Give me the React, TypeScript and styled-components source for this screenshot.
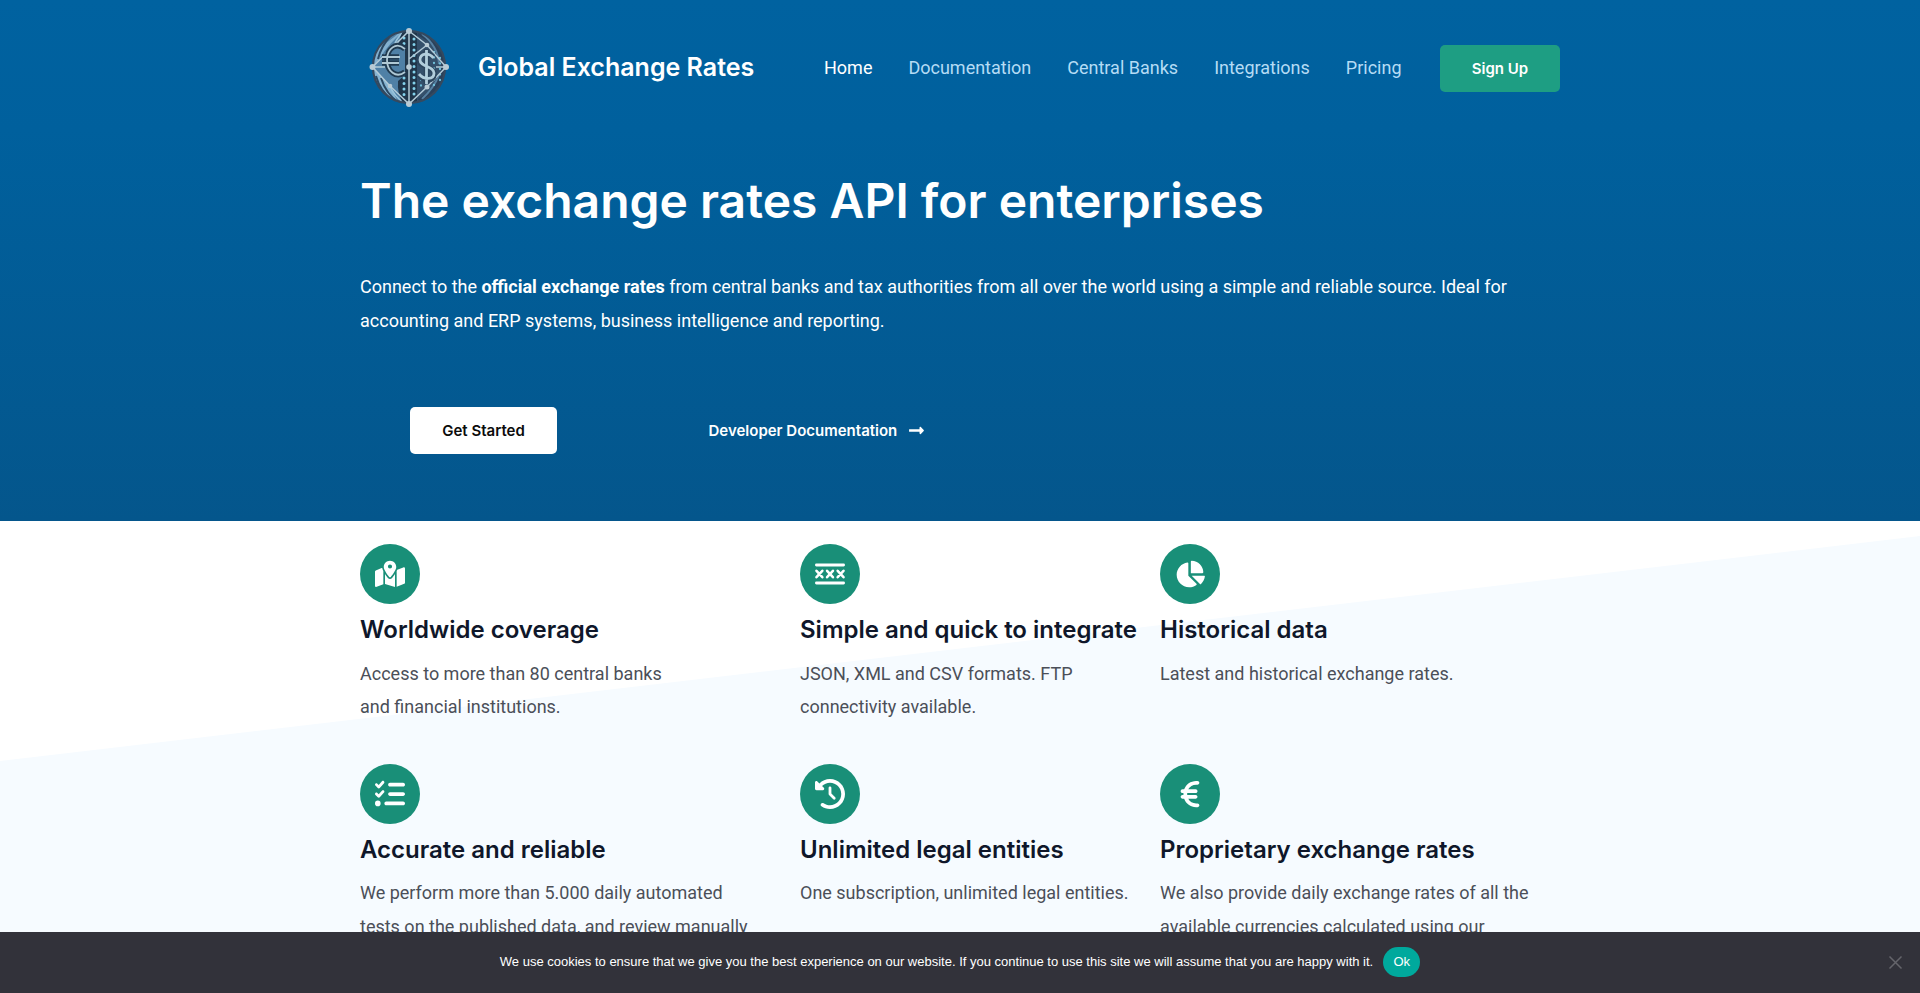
import React from "react";
import styled, { createGlobalStyle } from "styled-components";
import {
  FaMapLocationDot,
  FaChartPie,
  FaListCheck,
  FaClockRotateLeft,
  FaEuroSign,
} from "react-icons/fa6";
import { FaLongArrowAltRight } from "react-icons/fa";

const GlobalStyle = createGlobalStyle`
  * { box-sizing: border-box; }
  html, body { margin: 0; height: 100%; overflow: hidden; }
  body { font-family: Roboto, sans-serif; font-size: 18px; background: #fff; }
  h1, h2, h3, p { margin: 0; }
  a { text-decoration: none; color: inherit; }
`;

const Page = styled.div`
  height: 993px;
  overflow: hidden;
`;

const Container = styled.div`
  width: 1200px;
  margin: 0 auto;
`;

const Hero = styled.div`
  height: 521px;
  background: linear-gradient(180deg, #0062a0 0%, #00609d 25%, #04568c 100%);
  color: #fff;
`;

const HeaderBar = styled(Container)`
  height: 135px;
  display: flex;
  align-items: center;
`;

const Brand = styled.a`
  display: flex;
  align-items: center;
  gap: 28px;
  padding-left: 8px;
  margin-bottom: 1px;
  font: 600 25px/1.2 Inter, sans-serif;
  white-space: nowrap;
`;

const Nav = styled.nav`
  display: flex;
  gap: 36px;
  margin-left: auto;
  margin-right: 38.5px;
`;

const NavLink = styled.a<{ $active?: boolean }>`
  color: ${(p) => (p.$active ? "#fff" : "#b5dcf5")};
  line-height: 28px;
`;

const Button = styled.a<{ $tone: "green" | "white"; $width: number }>`
  display: flex;
  align-items: center;
  justify-content: center;
  width: ${(p) => p.$width}px;
  height: 47px;
  border-radius: 5px;
  font: 600 15px/1 Inter, sans-serif;
  background: ${(p) => (p.$tone === "green" ? "#1e9e83" : "#fff")};
  color: ${(p) => (p.$tone === "green" ? "#fff" : "#0b0b0b")};
`;

const SignUp = styled(Button)`
  margin-top: 2px;
`;

const Headline = styled.h1`
  padding-top: 36px;
  font: 600 48px/60px Inter, sans-serif;
`;

const Lead = styled.p`
  margin-top: 39px;
  line-height: 34px;
`;

const Actions = styled.div`
  display: flex;
  align-items: center;
  padding-left: 50px;
  margin-top: 69px;
  gap: 151.5px;
`;

const TextLink = styled.a`
  display: flex;
  align-items: center;
  gap: 11px;
  font: 600 15px/1 Inter, sans-serif;
`;

const Features = styled.main`
  position: relative;
  height: 472px;
  padding-top: 23px;
  &::before {
    content: "";
    position: absolute;
    inset: 0;
    background: #f6fbff;
    clip-path: polygon(0 240px, 100% 15px, 100% 100%, 0 100%);
  }
`;

const FeatureGrid = styled(Container)`
  position: relative;
  display: grid;
  grid-template-columns: 440px 360px 400px;
  grid-auto-rows: 220px;
`;

const FeatureIcon = styled.div`
  width: 60px;
  height: 60px;
  border-radius: 50%;
  background: #198f78;
  color: #fff;
  display: flex;
  align-items: center;
  justify-content: center;
  font-size: 30px;
`;

const FeatureTitle = styled.h2`
  margin-top: 10px;
  font: 600 24px/31px Inter, sans-serif;
  color: #0f172a;
  white-space: nowrap;
`;

const FeatureText = styled.p<{ $lift?: boolean }>`
  margin-top: ${(p) => (p.$lift ? 11 : 12)}px;
  line-height: ${(p) => (p.$lift ? 34 : 33.3)}px;
  color: #4b4f58;
  white-space: nowrap;
`;

const CookieBar = styled.aside`
  position: fixed;
  inset: auto 0 0;
  height: 61px;
  padding-bottom: 2px;
  background: #32323a;
  color: #fff;
  display: flex;
  align-items: center;
  justify-content: center;
  gap: 10px;
  font: 13px/20px "Liberation Sans", Arial, sans-serif;
`;

const OkButton = styled.button`
  width: 37px;
  height: 30px;
  padding: 0;
  border: 0;
  border-radius: 15px;
  background: #00a99d;
  color: #fff;
  font: inherit;
`;

const CloseMark = styled.svg`
  position: absolute;
  right: 17px;
  top: 23px;
`;

const Logo = () => (
  <svg width="82" height="82" viewBox="0 0 82 82">
    <defs>
      <clipPath id="globe"><circle cx="41" cy="41" r="36" /></clipPath>
    </defs>
    <circle cx="41" cy="41" r="37" fill="#34506b" />
    <g clipPath="url(#globe)" fill="none">
      <path d="M4 4H40V78H4Z" fill="#4f80a6" />
      <path d="M8 22Q20 17 32 6L36 5Q20 18 12 32L5 41Z" fill="#83b0cf" />
      <path d="M5 42L22 60L30 76Q10 70 5 42Z" fill="#86b4d2" />
      <path d="M24 8Q13 20 10 33M8 50Q12 65 25 75M13 52Q18 68 31 77" stroke="#2b4964" strokeWidth="2" />
      <path d="M36 5Q28 13 26 20M22 60Q26 70 36 77" stroke="#9cc5dc" strokeWidth="1.6" />
      <path d="M35 5H49V77H35Q29 68 30 55L37 49V20L31 17Q32 10 35 5Z" fill="#20364a" />
      <path d="M50 7Q74 17 76 41Q72 65 51 75" stroke="#2a415a" strokeWidth="5" />
      <path d="M54 8Q70 20 71 38M54 73Q66 62 71 49" stroke="#5680a1" strokeWidth="2" />
      <path d="M36 12V18M36 52V72M46 13V72" stroke="#83d2eb" strokeWidth="3" strokeDasharray="0 5.500" strokeLinecap="round" />
      <path d="M53 54V64M66 26V62M72 32V55" stroke="#70bfd9" strokeWidth="2.3" strokeDasharray="0 5.500" strokeLinecap="round" />
    </g>
    <circle cx="41" cy="41" r="36" fill="none" stroke="#34495f" strokeWidth="2" />
    <path d="M41 5L59 19 78 41 59 61 41 78 22 60 4.500 41ZM41 5V78M4.500 41H17M41 33L59 19M68 41H78" stroke="#b3cbd8" strokeWidth="1.5" fill="none" />
    <path d="M37 23C28 15 19 23 19 34S28 53 37 46M14 31H31M14 37H31" fill="none" stroke="#203a50" strokeWidth="5.5" />
    <path d="M37 23C28 15 19 23 19 34S28 53 37 46M14 31H32M14 37H31" fill="none" stroke="#b0c9d5" strokeWidth="1.8" />
    <path d="M65 31C60 25 51 27 51 34S66 40 66 48 55 55 51 49M58.500 23V58" fill="none" stroke="#2c455d" strokeWidth="5.5" />
    <path d="M65.500 32C61 26 52 27 52 34S66 40 66 47 56 54 51 48M58.500 24V58" fill="none" stroke="#b2cedc" strokeWidth="2.8" />
    <g fill="#b9cbd5">
      <circle cx="41" cy="5" r="3" /><circle cx="78" cy="41" r="3" /><circle cx="41" cy="78" r="3" />
      <circle cx="4.500" cy="41" r="3" /><circle cx="41" cy="41" r="2.8" /><circle cx="59" cy="19" r="2.3" />
      <circle cx="59" cy="61" r="2.5" /><circle cx="22" cy="60" r="2.3" />
    </g>
  </svg>
);

const FormatsIcon = () => (
  <svg width="30" height="30" viewBox="0 0 30 30" fill="none" stroke="currentColor" strokeLinecap="round">
    <path d="M1.400 6H28.600M1.400 24H28.600" strokeWidth="2.8" />
    <path
      d="M1.500 11.800L7.300 18.200M7.300 11.800L1.500 18.200M12.100 11.800L17.900 18.200M17.900 11.800L12.100 18.200M22.700 11.800L28.500 18.200M28.500 11.800L22.700 18.200"
      strokeWidth="2.500"
    />
  </svg>
);

const features = [
  { icon: <FaMapLocationDot />, title: "Worldwide coverage", lines: ["Access to more than 80 central banks", "and financial institutions."] },
  { icon: <FormatsIcon />, title: "Simple and quick to integrate", lines: ["JSON, XML and CSV formats. FTP", "connectivity available."] },
  { icon: <FaChartPie />, title: "Historical data", lines: ["Latest and historical exchange rates."] },
  { icon: <FaListCheck />, title: "Accurate and reliable", lines: ["We perform more than 5.000 daily automated", "tests on the published data, and review manually"] },
  { icon: <FaClockRotateLeft />, title: "Unlimited legal entities", lines: ["One subscription, unlimited legal entities."] },
  { icon: <FaEuroSign />, title: "Proprietary exchange rates", lines: ["We also provide daily exchange rates of all the", "available currencies calculated using our"] },
];

const links = ["Home", "Documentation", "Central Banks", "Integrations", "Pricing"];

export default function App() {
  return (
    <Page>
      <GlobalStyle />
      <Hero>
        <HeaderBar as="header">
          <Brand href="#"><Logo />Global Exchange Rates</Brand>
          <Nav>
            {links.map((l, i) => <NavLink key={l} href="#" $active={i === 0}>{l}</NavLink>)}
          </Nav>
          <SignUp href="#" $tone="green" $width={120}>Sign Up</SignUp>
        </HeaderBar>
        <Container>
          <Headline>The exchange rates API for enterprises</Headline>
          <Lead>
            Connect to the <strong>official exchange rates</strong> from central banks and tax authorities from all over
            the world using a simple and reliable source. Ideal for accounting and ERP systems, business intelligence
            and reporting.
          </Lead>
          <Actions>
            <Button href="#" $tone="white" $width={147}>Get Started</Button>
            <TextLink href="#">Developer Documentation <FaLongArrowAltRight size={17} /></TextLink>
          </Actions>
        </Container>
      </Hero>
      <Features>
        <FeatureGrid>
          {features.map((f, i) => (
            <section key={f.title}>
              <FeatureIcon>{f.icon}</FeatureIcon>
              <FeatureTitle>{f.title}</FeatureTitle>
              <FeatureText $lift={i > 2}>
                {f.lines.map((line) => <React.Fragment key={line}>{line}<br /></React.Fragment>)}
              </FeatureText>
            </section>
          ))}
        </FeatureGrid>
      </Features>
      <CookieBar>
        <span>
          We use cookies to ensure that we give you the best experience on our website. If you continue to use this site
          we will assume that you are happy with it.
        </span>
        <OkButton>Ok</OkButton>
        <CloseMark width="15" height="15" viewBox="0 0 15 15" stroke="#65656b" strokeWidth="1.5">
          <path d="M1.500 1.500L13.500 13.500M13.500 1.500L1.500 13.500" />
        </CloseMark>
      </CookieBar>
    </Page>
  );
}
